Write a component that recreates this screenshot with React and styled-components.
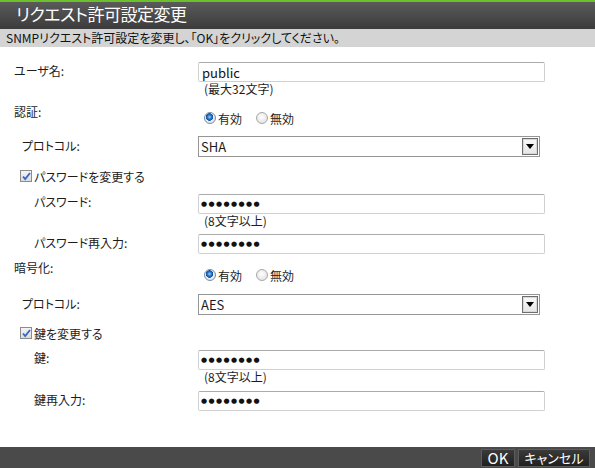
import styled, { createGlobalStyle } from "styled-components";

const GlobalStyle = createGlobalStyle`
  html, body {
    margin: 0;
    padding: 0;
    background: #fff;
  }
  body {
    font-family: "Noto Sans CJK JP", "Noto Sans", sans-serif;
    font-size: 12px;
    color: #1c1c1c;
    font-feature-settings: "palt";
  }
`;

const Dialog = styled.div`
  width: 595px;
  height: 468px;
  display: flex;
  flex-direction: column;
  overflow: hidden;
`;

const TitleBar = styled.div`
  height: 27px;
  border-top: 2px solid #6cc12a;
  background: linear-gradient(#5a5a5a, #3c3c3c);
  color: #fff;
  font-size: 17px;
  letter-spacing: -0.5px;
  line-height: 23px;
  padding-left: 16px;
`;

const SubHeader = styled.div`
  height: 18px;
  background: #d4d4d4;
  line-height: 18px;
  padding-left: 6px;
  color: #111;
`;

const Body = styled.div`
  flex: 1;
  padding: 15px 0 0 14px;
`;

const Row = styled.div`
  display: grid;
  grid-template-columns: 184px 347px;
  align-items: start;
  margin-top: ${(p) => p.$mt || 0}px;
`;

const Label = styled.div`
  padding-left: ${(p) => p.$indent || 0}px;
  line-height: ${(p) => p.$lh || 18}px;
`;

const Field = styled.div`
  display: flex;
  flex-direction: column;
  padding-top: ${(p) => p.$pt || 0}px;
`;

const TextBox = styled.input`
  box-sizing: border-box;
  width: ${(p) => p.$w || 347}px;
  height: 20px;
  margin: 0;
  padding: 0 3px;
  border: 1px solid #d0d0d0;
  border-top-color: #ababab;
  border-radius: 2px;
  outline: none;
  font-family: "Noto Sans CJK JP", "Noto Sans", sans-serif;
  font-size: 13px;
  color: #111;
  background: #fff;
`;

const Secret = styled(TextBox)`
  font-family: "DejaVu Sans", sans-serif;
  font-size: 7px;
  letter-spacing: 1.4px;
  padding-left: 2px;
`;

const Hint = styled.div`
  line-height: 14px;
  padding-left: 6px;
`;

const RadioGroup = styled.div`
  display: flex;
  align-items: center;
  height: 16px;
  padding-left: 6px;
  gap: 14px;
`;

const RadioItem = styled.label`
  display: flex;
  align-items: center;
  gap: 2px;
`;

const RadioDot = styled.span`
  box-sizing: border-box;
  width: 12px;
  height: 12px;
  border-radius: 50%;
  border: 1px solid ${(p) => (p.$on ? "#7b8da6" : "#a8a8a8")};
  background: ${(p) =>
    p.$on
      ? "radial-gradient(circle at 45% 40%, #9fd4ff 0, #2a78d0 2px, #124c9a 3.5px, #eef2f7 4px, #dfe3e8 6px)"
      : "radial-gradient(circle at 45% 40%, #ffffff 0, #e4e4e4 6px)"};
`;

const SelectBox = styled.div`
  box-sizing: border-box;
  width: 342px;
  height: 21px;
  border: 1px solid #969696;
  display: flex;
  align-items: center;
  justify-content: space-between;
  padding: 0 1px 0 2px;
  font-size: 13px;
  background: #fff;
`;

const ArrowButton = styled.span`
  box-sizing: border-box;
  width: 16px;
  height: 17px;
  border: 1px solid #6e6e6e;
  box-shadow: inset 0 0 0 1px #d8d8d8;
  background: linear-gradient(#fafafa, #e6e6e6);
  display: flex;
  align-items: center;
  justify-content: center;
`;

const CheckRow = styled.label`
  display: flex;
  align-items: center;
  gap: 2px;
  height: 16px;
  padding-left: 6px;
  margin-top: ${(p) => p.$mt || 0}px;
`;

const CheckBox = styled.span`
  box-sizing: border-box;
  width: 12px;
  height: 12px;
  border: 1px solid #8c8c8c;
  background: linear-gradient(#f4f4f4, #dcdcdc);
  display: flex;
  align-items: center;
  justify-content: center;
`;

const Footer = styled.div`
  height: 21px;
  background: #4a4a4a;
  display: flex;
  justify-content: flex-end;
  align-items: center;
  gap: 3px;
  padding-right: 5px;
`;

const Button = styled.button`
  box-sizing: border-box;
  width: ${(p) => p.$w}px;
  height: 18px;
  margin: 0;
  padding: 0;
  border: 1px solid #5c5c5c;
  background: linear-gradient(#3a3a3a, #202020);
  color: #fff;
  font-family: "Noto Sans CJK JP", "Noto Sans", sans-serif;
  font-size: ${(p) => p.$fs || 13}px;
  line-height: 16px;
  font-feature-settings: "palt";
`;

function Radio({ on, children }) {
  return (
    <RadioItem>
      <RadioDot $on={on} />
      {children}
    </RadioItem>
  );
}

function Select({ value }) {
  return (
    <SelectBox>
      <span>{value}</span>
      <ArrowButton>
        <svg width="8" height="5" viewBox="0 0 8 5">
          <path d="M0 0h8L4 5z" fill="#000" />
        </svg>
      </ArrowButton>
    </SelectBox>
  );
}

function Check({ mt, children }) {
  return (
    <CheckRow $mt={mt}>
      <CheckBox>
        <svg width="9" height="9" viewBox="0 0 9 9">
          <path
            d="M1 4.5l2.2 2.6L8 1"
            fill="none"
            stroke="#3564c8"
            strokeWidth="1.8"
          />
        </svg>
      </CheckBox>
      {children}
    </CheckRow>
  );
}

const DOTS = "●●●●●●●●";

export default function App() {
  return (
    <>
      <GlobalStyle />
      <Dialog>
        <TitleBar>リクエスト許可設定変更</TitleBar>
        <SubHeader>SNMPリクエスト許可設定を変更し、「OK」をクリックしてください。</SubHeader>
        <Body>
          <Row>
            <Label>ユーザ名:</Label>
            <Field>
              <TextBox readOnly defaultValue="public" />
              <Hint>(最大32文字)</Hint>
            </Field>
          </Row>

          <Row $mt={8}>
            <Label $lh={16}>認証:</Label>
            <Field $pt={6}>
              <RadioGroup>
                <Radio on>有効</Radio>
                <Radio>無効</Radio>
              </RadioGroup>
            </Field>
          </Row>

          <Row $mt={10}>
            <Label $indent={8} $lh={19}>プロトコル:</Label>
            <Select value="SHA" />
          </Row>

          <Check mt={11}>パスワードを変更する</Check>

          <Row $mt={10}>
            <Label $indent={20} $lh={16}>パスワード:</Label>
            <Field>
              <Secret readOnly defaultValue={DOTS} />
              <Hint>(8文字以上)</Hint>
            </Field>
          </Row>

          <Row $mt={6}>
            <Label $indent={20}>パスワード再入力:</Label>
            <Secret readOnly defaultValue={DOTS} />
          </Row>

          <Row $mt={6}>
            <Label $lh={16}>暗号化:</Label>
            <Field $pt={7}>
              <RadioGroup>
                <Radio on>有効</Radio>
                <Radio>無効</Radio>
              </RadioGroup>
            </Field>
          </Row>

          <Row $mt={11}>
            <Label $indent={8} $lh={19}>プロトコル:</Label>
            <Select value="AES" />
          </Row>

          <Check mt={10}>鍵を変更する</Check>

          <Row $mt={9}>
            <Label $indent={20} $lh={16}>鍵:</Label>
            <Field>
              <Secret readOnly defaultValue={DOTS} />
              <Hint>(8文字以上)</Hint>
            </Field>
          </Row>

          <Row $mt={7}>
            <Label $indent={20}>鍵再入力:</Label>
            <Secret readOnly defaultValue={DOTS} />
          </Row>
        </Body>
        <Footer>
          <Button $w={34} $fs={15}>OK</Button>
          <Button $w={72}>キャンセル</Button>
        </Footer>
      </Dialog>
    </>
  );
}
